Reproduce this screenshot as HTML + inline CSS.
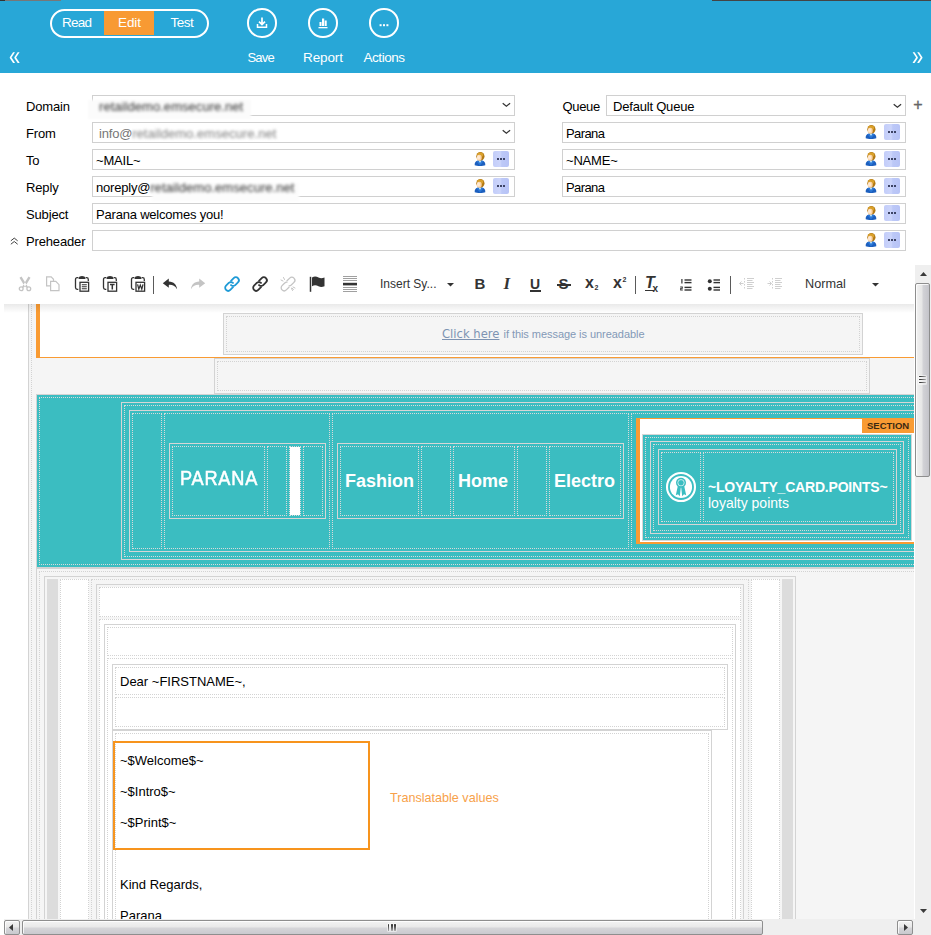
<!DOCTYPE html>
<html><head><meta charset="utf-8"><title>Mail editor</title>
<style>
html,body{margin:0;padding:0;}
body{width:931px;height:935px;overflow:hidden;background:#fff;position:relative;font-family:"Liberation Sans",sans-serif;}
div{position:absolute;box-sizing:border-box;}
.t{white-space:nowrap;line-height:16px;font-size:13px;color:#000;}
.tb{border:1px solid #d3d3d3;}
.td{border:1px dotted #d3d3d3;}
.tbt{border:1px solid #d6d6d6;}
.tdt{border:1px dotted #dadada;}
.inp{border:1px solid #d0d0d0;background:#fff;}
.dots{background:linear-gradient(90deg,#c3cdf9,#ccd5fb 45%,#bcc8f7 55%,#b7c3f6);border-radius:2px;}
svg{position:absolute;overflow:visible;}
</style></head>
<body>
<div style="left:0px;top:0px;width:931px;height:73px;background:#28a7d7;"></div>
<div style="left:0px;top:0px;width:5px;height:1px;background:#333;"></div>
<div style="left:5px;top:0px;width:56px;height:1px;background:#777;"></div>
<div style="left:712px;top:0px;width:219px;height:1px;background:#444;"></div>
<div style="left:50px;top:8.5px;width:158.5px;height:29px;border:2.5px solid #fff;border-radius:14.5px;overflow:hidden;"><div style="left:51.5px;top:0;width:50.5px;height:24px;background:#f89a33;"></div></div>
<div class="t" style="left:62px;top:15px;color:#fff;font-size:13.5px;line-height:16px;letter-spacing:-0.75px;">Read</div>
<div class="t" style="left:118px;top:15px;color:#fff;font-size:13.5px;line-height:16px;letter-spacing:-0.1px;">Edit</div>
<div class="t" style="left:170.5px;top:15px;color:#fff;font-size:13.5px;line-height:16px;letter-spacing:-0.5px;">Test</div>
<div class="t" style="left:247.5px;top:50px;color:#fff;font-size:13.5px;line-height:16px;font-size:13px;letter-spacing:-0.8px;">Save</div>
<div class="t" style="left:303px;top:50px;color:#fff;font-size:13.5px;line-height:16px;letter-spacing:-0.1px;">Report</div>
<div class="t" style="left:363.5px;top:50px;color:#fff;font-size:13.5px;line-height:16px;letter-spacing:-0.45px;">Actions</div>
<div style="left:247.3px;top:8.2px;width:29.4px;height:29.4px;border:2.6px solid #fff;border-radius:50%;"></div>
<div style="left:308.3px;top:8.2px;width:29.4px;height:29.4px;border:2.6px solid #fff;border-radius:50%;"></div>
<div style="left:369.3px;top:8.2px;width:29.4px;height:29.4px;border:2.6px solid #fff;border-radius:50%;"></div>
<svg style="left:247px;top:8px" width="30" height="30" viewBox="0 0 30 30"><path d="M15 9.5v6.5M12 13.6l3 3 3-3" fill="none" stroke="#fff" stroke-width="1.7"/><path d="M10.5 16v3.2h9V16" fill="none" stroke="#fff" stroke-width="1.5"/></svg>
<svg style="left:308px;top:8px" width="30" height="30" viewBox="0 0 30 30"><rect x="11.5" y="14" width="2" height="4" fill="#fff"/><rect x="14" y="10.5" width="2.2" height="7.5" fill="#fff"/><rect x="16.7" y="12.5" width="2" height="5.5" fill="#fff"/><rect x="10.5" y="19" width="9" height="1.3" fill="#fff"/></svg>
<svg style="left:369px;top:8px" width="30" height="30" viewBox="0 0 30 30"><rect x="10.6" y="16.2" width="2" height="2" fill="#fff"/><rect x="14" y="16.2" width="2" height="2" fill="#fff"/><rect x="17.4" y="16.2" width="2" height="2" fill="#fff"/></svg>
<div class="t" style="left:8.8px;top:41.2px;color:#fff;font-size:28px;line-height:30px;transform:scaleX(.72);transform-origin:0 0;">&laquo;</div>
<div class="t" style="left:912.3px;top:41.2px;color:#fff;font-size:28px;line-height:30px;transform:scaleX(.72);transform-origin:0 0;">&raquo;</div>
<div class="t" style="left:26px;top:99px;font-size:13px;letter-spacing:-0.15px;">Domain</div>
<div class="t" style="left:26px;top:126px;font-size:13px;letter-spacing:-0.15px;">From</div>
<div class="t" style="left:26px;top:153px;font-size:13px;letter-spacing:-0.15px;">To</div>
<div class="t" style="left:26px;top:180px;font-size:13px;letter-spacing:-0.15px;">Reply</div>
<div class="t" style="left:26px;top:207px;font-size:13px;letter-spacing:-0.15px;">Subject</div>
<div class="t" style="left:26px;top:234px;font-size:13px;letter-spacing:-0.15px;">Preheader</div>
<div class="t" style="left:562.5px;top:99px;font-size:13px;letter-spacing:-0.15px;letter-spacing:-0.35px;">Queue</div>
<div class="t" style="left:913.3px;top:96.5px;font-size:16px;line-height:16px;color:#666;-webkit-text-stroke:.35px #666;">+</div>
<svg style="left:10px;top:236.500px" width="8.500" height="8.500" viewBox="0 0 10 10"><path d="M1 4.5l4-3.2 4 3.2M1 8.5l4-3.2 4 3.2" fill="none" stroke="#333" stroke-width="1.1"/></svg>
<div class="inp" style="left:92px;top:95px;width:423px;height:21px;"></div>
<div class="inp" style="left:92px;top:122px;width:423px;height:21px;"></div>
<div class="inp" style="left:92px;top:149px;width:423px;height:21px;"></div>
<div class="inp" style="left:92px;top:176px;width:423px;height:21px;"></div>
<div class="inp" style="left:92px;top:203px;width:814px;height:21px;"></div>
<div class="inp" style="left:92px;top:230px;width:814px;height:21px;"></div>
<div class="inp" style="left:606px;top:95px;width:300px;height:21px;"></div>
<div class="inp" style="left:562px;top:122px;width:344px;height:21px;"></div>
<div class="inp" style="left:562px;top:149px;width:344px;height:21px;"></div>
<div class="inp" style="left:562px;top:176px;width:344px;height:21px;"></div>
<svg style="left:502px;top:102px" width="9" height="6" viewBox="0 0 9 6"><path d="M.7 1.200l3.700 3.100L8.100 1.200" fill="none" stroke="#333" stroke-width="1.200"/></svg>
<svg style="left:502px;top:129px" width="9" height="6" viewBox="0 0 9 6"><path d="M.7 1.200l3.700 3.100L8.100 1.200" fill="none" stroke="#333" stroke-width="1.200"/></svg>
<svg style="left:893px;top:102.5px" width="9" height="6" viewBox="0 0 9 6"><path d="M.7 1.200l3.700 3.100L8.100 1.200" fill="none" stroke="#333" stroke-width="1.200"/></svg>
<div style="left:88px;top:100px;width:163px;height:19px;background:#fbfbfb;filter:blur(1.300px);"></div>
<div style="left:152px;top:183px;width:147px;height:18px;background:#fcfcfc;filter:blur(1.300px);"></div>
<div class="t" style="left:99px;top:99px;font-size:13px;letter-spacing:-0.2px;"><span style="filter:blur(1.450px);color:#333;letter-spacing:0.05px;">retaildemo.emsecure.net</span></div>
<div class="t" style="left:99px;top:126px;font-size:13px;letter-spacing:-0.2px;"><span style="color:#777">info@</span><span style="filter:blur(1.450px);color:#808080;letter-spacing:0.05px;">retaildemo.emsecure.net</span></div>
<div class="t" style="left:96px;top:153px;font-size:13px;letter-spacing:-0.2px;">~MAIL~</div>
<div class="t" style="left:96px;top:180px;font-size:13px;letter-spacing:-0.2px;">noreply@<span style="filter:blur(1.450px);color:#333;letter-spacing:0.05px;">retaildemo.emsecure.net</span></div>
<div class="t" style="left:96px;top:207px;font-size:13px;letter-spacing:-0.2px;">Parana welcomes you!</div>
<div class="t" style="left:613px;top:99px;font-size:13px;letter-spacing:-0.2px;">Default Queue</div>
<div class="t" style="left:566px;top:126px;font-size:13px;letter-spacing:-0.2px;letter-spacing:-0.6px;">Parana</div>
<div class="t" style="left:566px;top:153px;font-size:13px;letter-spacing:-0.2px;">~NAME~</div>
<div class="t" style="left:566px;top:180px;font-size:13px;letter-spacing:-0.2px;letter-spacing:-0.6px;">Parana</div>
<svg style="left:474px;top:152px" width="12" height="14" viewBox="0 0 12 14"><path d="M.7 13.200c-.4-2.700 1.200-4.300 3.400-4.800h3.800c2.200.5 3.800 2.100 3.400 4.800c-2 1.100-8.600 1.100-10.600 0z" fill="#1c5fbe"/><path d="M2.500 9.300c1.500 2 2.500 3 3.500 4.300c1-1.300 2-2.300 3.500-4.300l-1.600-.9h-3.800z" fill="#2b78d8"/><path d="M4.600 8.500l1.400 2.600 1.400-2.600z" fill="#c9effa"/><ellipse cx="6.400" cy="4.300" rx="4.100" ry="4.300" fill="#b47a14"/><ellipse cx="6.200" cy="2.800" rx="3" ry="2.200" fill="#d9a02a"/><ellipse cx="5.200" cy="5.700" rx="2.500" ry="3" fill="#fcd3a6"/><ellipse cx="4.600" cy="5.400" rx="1.500" ry="2.200" fill="#fee9d2"/></svg>
<div class="dots" style="left:493px;top:151px;width:16px;height:16px;"><div style="left:4px;top:7px;width:2px;height:2px;background:#3d4466"></div><div style="left:7px;top:7px;width:2px;height:2px;background:#3d4466"></div><div style="left:10px;top:7px;width:2px;height:2px;background:#3d4466"></div></div>
<svg style="left:474px;top:179px" width="12" height="14" viewBox="0 0 12 14"><path d="M.7 13.200c-.4-2.700 1.200-4.300 3.400-4.800h3.800c2.200.5 3.800 2.100 3.400 4.800c-2 1.100-8.600 1.100-10.600 0z" fill="#1c5fbe"/><path d="M2.500 9.300c1.500 2 2.500 3 3.500 4.300c1-1.300 2-2.300 3.500-4.300l-1.600-.9h-3.800z" fill="#2b78d8"/><path d="M4.600 8.500l1.400 2.600 1.400-2.600z" fill="#c9effa"/><ellipse cx="6.400" cy="4.300" rx="4.100" ry="4.300" fill="#b47a14"/><ellipse cx="6.200" cy="2.800" rx="3" ry="2.200" fill="#d9a02a"/><ellipse cx="5.200" cy="5.700" rx="2.500" ry="3" fill="#fcd3a6"/><ellipse cx="4.600" cy="5.400" rx="1.500" ry="2.200" fill="#fee9d2"/></svg>
<div class="dots" style="left:493px;top:178px;width:16px;height:16px;"><div style="left:4px;top:7px;width:2px;height:2px;background:#3d4466"></div><div style="left:7px;top:7px;width:2px;height:2px;background:#3d4466"></div><div style="left:10px;top:7px;width:2px;height:2px;background:#3d4466"></div></div>
<svg style="left:865px;top:125px" width="12" height="14" viewBox="0 0 12 14"><path d="M.7 13.200c-.4-2.700 1.200-4.300 3.400-4.800h3.800c2.200.5 3.800 2.100 3.400 4.800c-2 1.100-8.600 1.100-10.600 0z" fill="#1c5fbe"/><path d="M2.500 9.300c1.500 2 2.500 3 3.500 4.300c1-1.300 2-2.300 3.500-4.300l-1.600-.9h-3.800z" fill="#2b78d8"/><path d="M4.600 8.500l1.400 2.600 1.400-2.600z" fill="#c9effa"/><ellipse cx="6.400" cy="4.300" rx="4.100" ry="4.300" fill="#b47a14"/><ellipse cx="6.200" cy="2.800" rx="3" ry="2.200" fill="#d9a02a"/><ellipse cx="5.200" cy="5.700" rx="2.500" ry="3" fill="#fcd3a6"/><ellipse cx="4.600" cy="5.400" rx="1.500" ry="2.200" fill="#fee9d2"/></svg>
<div class="dots" style="left:884px;top:124px;width:16px;height:16px;"><div style="left:4px;top:7px;width:2px;height:2px;background:#3d4466"></div><div style="left:7px;top:7px;width:2px;height:2px;background:#3d4466"></div><div style="left:10px;top:7px;width:2px;height:2px;background:#3d4466"></div></div>
<svg style="left:865px;top:152px" width="12" height="14" viewBox="0 0 12 14"><path d="M.7 13.200c-.4-2.700 1.200-4.300 3.400-4.800h3.800c2.200.5 3.800 2.100 3.400 4.800c-2 1.100-8.600 1.100-10.600 0z" fill="#1c5fbe"/><path d="M2.500 9.300c1.500 2 2.500 3 3.500 4.300c1-1.300 2-2.300 3.500-4.300l-1.600-.9h-3.800z" fill="#2b78d8"/><path d="M4.600 8.500l1.400 2.600 1.400-2.600z" fill="#c9effa"/><ellipse cx="6.400" cy="4.300" rx="4.100" ry="4.300" fill="#b47a14"/><ellipse cx="6.200" cy="2.800" rx="3" ry="2.200" fill="#d9a02a"/><ellipse cx="5.200" cy="5.700" rx="2.500" ry="3" fill="#fcd3a6"/><ellipse cx="4.600" cy="5.400" rx="1.500" ry="2.200" fill="#fee9d2"/></svg>
<div class="dots" style="left:884px;top:151px;width:16px;height:16px;"><div style="left:4px;top:7px;width:2px;height:2px;background:#3d4466"></div><div style="left:7px;top:7px;width:2px;height:2px;background:#3d4466"></div><div style="left:10px;top:7px;width:2px;height:2px;background:#3d4466"></div></div>
<svg style="left:865px;top:179px" width="12" height="14" viewBox="0 0 12 14"><path d="M.7 13.200c-.4-2.700 1.200-4.300 3.400-4.800h3.800c2.200.5 3.800 2.100 3.400 4.800c-2 1.100-8.600 1.100-10.600 0z" fill="#1c5fbe"/><path d="M2.500 9.300c1.500 2 2.500 3 3.500 4.300c1-1.300 2-2.300 3.500-4.300l-1.600-.9h-3.800z" fill="#2b78d8"/><path d="M4.600 8.500l1.400 2.600 1.400-2.600z" fill="#c9effa"/><ellipse cx="6.400" cy="4.300" rx="4.100" ry="4.300" fill="#b47a14"/><ellipse cx="6.200" cy="2.800" rx="3" ry="2.200" fill="#d9a02a"/><ellipse cx="5.200" cy="5.700" rx="2.500" ry="3" fill="#fcd3a6"/><ellipse cx="4.600" cy="5.400" rx="1.500" ry="2.200" fill="#fee9d2"/></svg>
<div class="dots" style="left:884px;top:178px;width:16px;height:16px;"><div style="left:4px;top:7px;width:2px;height:2px;background:#3d4466"></div><div style="left:7px;top:7px;width:2px;height:2px;background:#3d4466"></div><div style="left:10px;top:7px;width:2px;height:2px;background:#3d4466"></div></div>
<svg style="left:865px;top:206px" width="12" height="14" viewBox="0 0 12 14"><path d="M.7 13.200c-.4-2.700 1.200-4.300 3.400-4.800h3.800c2.200.5 3.800 2.100 3.400 4.800c-2 1.100-8.600 1.100-10.600 0z" fill="#1c5fbe"/><path d="M2.500 9.300c1.500 2 2.500 3 3.500 4.300c1-1.300 2-2.300 3.500-4.300l-1.600-.9h-3.800z" fill="#2b78d8"/><path d="M4.600 8.500l1.400 2.600 1.400-2.600z" fill="#c9effa"/><ellipse cx="6.400" cy="4.300" rx="4.100" ry="4.300" fill="#b47a14"/><ellipse cx="6.200" cy="2.800" rx="3" ry="2.200" fill="#d9a02a"/><ellipse cx="5.200" cy="5.700" rx="2.500" ry="3" fill="#fcd3a6"/><ellipse cx="4.600" cy="5.400" rx="1.500" ry="2.200" fill="#fee9d2"/></svg>
<div class="dots" style="left:884px;top:205px;width:16px;height:16px;"><div style="left:4px;top:7px;width:2px;height:2px;background:#3d4466"></div><div style="left:7px;top:7px;width:2px;height:2px;background:#3d4466"></div><div style="left:10px;top:7px;width:2px;height:2px;background:#3d4466"></div></div>
<svg style="left:865px;top:233px" width="12" height="14" viewBox="0 0 12 14"><path d="M.7 13.200c-.4-2.700 1.200-4.300 3.400-4.800h3.800c2.200.5 3.800 2.100 3.400 4.800c-2 1.100-8.600 1.100-10.600 0z" fill="#1c5fbe"/><path d="M2.500 9.300c1.500 2 2.500 3 3.500 4.300c1-1.300 2-2.300 3.500-4.300l-1.600-.9h-3.800z" fill="#2b78d8"/><path d="M4.600 8.500l1.400 2.600 1.400-2.600z" fill="#c9effa"/><ellipse cx="6.400" cy="4.300" rx="4.100" ry="4.300" fill="#b47a14"/><ellipse cx="6.200" cy="2.800" rx="3" ry="2.200" fill="#d9a02a"/><ellipse cx="5.200" cy="5.700" rx="2.500" ry="3" fill="#fcd3a6"/><ellipse cx="4.600" cy="5.400" rx="1.500" ry="2.200" fill="#fee9d2"/></svg>
<div class="dots" style="left:884px;top:232px;width:16px;height:16px;"><div style="left:4px;top:7px;width:2px;height:2px;background:#3d4466"></div><div style="left:7px;top:7px;width:2px;height:2px;background:#3d4466"></div><div style="left:10px;top:7px;width:2px;height:2px;background:#3d4466"></div></div>
<div id="ed" style="left:0;top:265px;width:915px;height:654px;overflow:hidden;">
<div class="tb" style="left:28px;top:0px;width:886px;height:936px;background:#f5f5f5;border-right:0;"></div>
<div class="td" style="left:31px;top:0px;width:883px;height:936px;border-right:0;"></div>
<div style="left:36px;top:0px;width:878px;height:93px;background:#fff;border-left:4px solid #f99b33;border-bottom:1px solid #f99b33;border-right:0;"></div>
<div class="tb" style="left:223px;top:48px;width:640px;height:42px;background:#f5f5f5;"></div>
<div class="td" style="left:226px;top:51px;width:634px;height:36px;"></div>
<div class="t" style="left:442px;top:60.8px;"><span style="font-family:'DejaVu Sans',sans-serif;font-size:11.6px;text-decoration:underline;color:#7d93b2;">Click here</span></div>
<div class="t" style="left:503.5px;top:61.5px;font-size:11px;color:#8399b7;line-height:14px;letter-spacing:-0.05px;">if this message is unreadable</div>
<div class="tb" style="left:214px;top:93px;width:656px;height:36px;"></div>
<div class="td" style="left:217px;top:96px;width:650px;height:30px;"></div>
<div class="tb" style="left:36px;top:129px;width:878px;height:174px;background:#3bbdc1;border-right:0;"></div>
<div class="tdt" style="left:39px;top:132px;width:875px;height:168px;border-right:0;"></div>
<div class="tbt" style="left:121px;top:137px;width:793px;height:158px;border-right:0;"></div>
<div class="tdt" style="left:124px;top:140px;width:790px;height:152px;border-right:0;"></div>
<div class="tbt" style="left:129px;top:145px;width:785px;height:142px;border-right:0;"></div>
<div class="tdt" style="left:132px;top:148px;width:30px;height:136px;"></div>
<div class="tdt" style="left:164px;top:148px;width:166px;height:136px;"></div>
<div class="tdt" style="left:332px;top:148px;width:297px;height:136px;"></div>
<div class="tdt" style="left:631px;top:148px;width:283px;height:136px;border-right:0;"></div>
<div class="tbt" style="left:169px;top:178px;width:157px;height:76px;"></div>
<div class="tdt" style="left:172px;top:181px;width:93px;height:70px;"></div>
<div class="tdt" style="left:267px;top:181px;width:20px;height:70px;"></div>
<div class="tdt" style="left:289px;top:181px;width:12px;height:70px;background:#fff;background-clip:padding-box;"></div>
<div class="tdt" style="left:303px;top:181px;width:20px;height:70px;"></div>
<div class="t" style="left:180px;top:200px;color:#fff;font-size:21px;line-height:26px;letter-spacing:0.9px;transform:scaleX(0.865);transform-origin:0 0;-webkit-text-stroke:0.55px #fff;">PARANA</div>
<div class="tbt" style="left:337px;top:178px;width:287px;height:76px;"></div>
<div class="tdt" style="left:340px;top:181px;width:79px;height:70px;"></div>
<div class="tdt" style="left:421px;top:181px;width:30px;height:70px;"></div>
<div class="tdt" style="left:453px;top:181px;width:62px;height:70px;"></div>
<div class="tdt" style="left:517px;top:181px;width:30px;height:70px;"></div>
<div class="tdt" style="left:549px;top:181px;width:72px;height:70px;"></div>
<div class="t" style="left:345px;top:205px;color:#fff;font-size:18px;font-weight:bold;line-height:22px;">Fashion</div>
<div class="t" style="left:458px;top:205px;color:#fff;font-size:18px;font-weight:bold;line-height:22px;">Home</div>
<div class="t" style="left:554px;top:205px;color:#fff;font-size:18px;font-weight:bold;line-height:22px;">Electro</div>
<div style="left:636px;top:153px;width:278px;height:126px;background:#fff;border-left:4px solid #f99b33;border-top:1px solid #f99b33;border-bottom:2px solid #f99b33;border-right:0;"></div>
<div style="left:862px;top:153px;width:52px;height:15px;background:#f99b33;"></div>
<div class="t" style="left:867px;top:154px;font-size:9.5px;font-weight:bold;letter-spacing:0px;color:#3c2a12;line-height:14px;">SECTION</div>
<div class="tbt" style="left:642px;top:169px;width:270px;height:107px;background:#3bbdc1;"></div>
<div class="tdt" style="left:645px;top:172px;width:264px;height:101px;"></div>
<div class="tbt" style="left:650px;top:176px;width:254px;height:93px;"></div>
<div class="tdt" style="left:653px;top:179px;width:248px;height:87px;"></div>
<div class="tbt" style="left:658px;top:184px;width:239px;height:76px;"></div>
<div class="tdt" style="left:661px;top:187px;width:40px;height:70px;"></div>
<div class="tdt" style="left:703px;top:187px;width:191px;height:70px;"></div>
<div class="t" style="left:708px;top:214px;color:#fff;font-size:14px;font-weight:bold;line-height:16px;letter-spacing:-0.2px;">~LOYALTY_CARD.POINTS~</div>
<div class="t" style="left:708px;top:230px;color:#fff;font-size:14px;line-height:16px;">loyalty points</div>
<svg style="left:666px;top:206.8px" width="30" height="30" viewBox="0 0 30 30"><circle cx="15" cy="15" r="14" fill="none" stroke="#fff" stroke-width="2.100"/><circle cx="15" cy="15" r="11.100" fill="#fff"/><circle cx="15" cy="10.750" r="5" fill="#3bbdc1"/><circle cx="15" cy="10.750" r="3.200" fill="none" stroke="#e6f7f7" stroke-width=".8"/><path d="M11.700 14.400h3.200l-1.100 9.800-1.800-1.900-2.200 1z" fill="#3bbdc1"/><path d="M15.100 14.400h3.200l1.900 8.900-2.200-1-1.800 1.900z" fill="#3bbdc1"/></svg>
<div class="tb" style="left:36px;top:303px;width:878px;height:733px;border-right:0;"></div>
<div class="td" style="left:39px;top:306px;width:875px;height:730px;border-right:0;"></div>
<div class="tb" style="left:44px;top:311px;width:752px;height:725px;"></div>
<div style="left:47px;top:314px;width:11px;height:722px;background:#dcdcdc;"></div>
<div class="td" style="left:60px;top:314px;width:29px;height:722px;background:#fff;"></div>
<div class="td" style="left:91px;top:314px;width:658px;height:722px;"></div>
<div class="td" style="left:751px;top:314px;width:29px;height:722px;background:#fff;"></div>
<div style="left:782px;top:314px;width:11px;height:722px;background:#dcdcdc;"></div>
<div class="tb" style="left:96px;top:319px;width:648px;height:717px;"></div>
<div class="td" style="left:99px;top:322px;width:642px;height:30px;background:#fff;"></div>
<div class="td" style="left:99px;top:354px;width:642px;height:682px;background:#fff;"></div>
<div class="tb" style="left:104px;top:359px;width:632px;height:677px;"></div>
<div class="td" style="left:107px;top:362px;width:626px;height:29px;"></div>
<div class="td" style="left:107px;top:393px;width:626px;height:643px;"></div>
<div class="tb" style="left:112px;top:399px;width:616px;height:66px;"></div>
<div class="td" style="left:115px;top:402px;width:610px;height:28px;"></div>
<div class="td" style="left:115px;top:432px;width:610px;height:30px;"></div>
<div class="tb" style="left:112px;top:465px;width:600px;height:571px;"></div>
<div class="td" style="left:115px;top:468px;width:594px;height:568px;"></div>
<div class="t" style="left:120px;top:409px;font-size:13px;line-height:15px;">Dear ~FIRSTNAME~,</div>
<div style="left:113px;top:476px;width:257px;height:109px;border:2px solid #f7941d;"></div>
<div class="t" style="left:120px;top:488px;font-size:13px;line-height:15px;">~$Welcome$~</div>
<div class="t" style="left:120px;top:519px;font-size:13px;line-height:15px;">~$Intro$~</div>
<div class="t" style="left:120px;top:550px;font-size:13px;line-height:15px;">~$Print$~</div>
<div class="t" style="left:120px;top:612px;font-size:13px;line-height:15px;">Kind Regards,</div>
<div class="t" style="left:120px;top:643px;font-size:13px;line-height:15px;">Parana</div>
<div class="t" style="left:390px;top:525.7px;font-size:12.6px;line-height:15px;color:#f7a14a;">Translatable values</div>
</div>
<div style="left:4px;top:304px;width:910px;height:9px;background:linear-gradient(rgba(0,0,0,0.085),rgba(0,0,0,0));"></div>
<div style="left:0px;top:262px;width:914px;height:42px;background:#fff;"></div>
<svg style="left:17px;top:276px" width="16" height="16" viewBox="0 0 16 16"><g fill="none" stroke="#c4c4c4"><path d="M2.500 1.700L4.500 .5L9.100 8L10.900 10.800L9.400 11.700L7 9.200zM13.500 1.700L11.500 .5L6.900 8L5.100 10.800L6.600 11.700L9 9.200z" fill="#c4c4c4" stroke="none"/><circle cx="4.200" cy="12.800" r="1.900" stroke-width="1.300"/><circle cx="11.800" cy="12.800" r="1.900" stroke-width="1.300"/></g></svg>
<svg style="left:45px;top:276px" width="16" height="16" viewBox="0 0 16 16"><g fill="#fff" stroke="#c4c4c4" stroke-width="1.200"><path d="M1.600 .8h4.600l2.300 2.500v6.500H1.600z"/><path d="M5.600 5.300h5.200l3.200 3.400v6H5.600z"/></g></svg>
<svg style="left:73.5px;top:276px" width="16" height="16" viewBox="0 0 16 16"><g fill="none" stroke="#333"><path d="M4.300 1.700H3.200Q1.500 1.700 1.500 3.400V11.600Q1.500 13.300 3.200 13.300H4.300" stroke-width="1.300"/><path d="M11.700 1.700H12.600Q14.300 1.700 14.300 3.400V5" stroke-width="1.300"/><path d="M4.600 3V1.800Q5 0 8 0T11.400 1.800V3z" fill="#333" stroke="none"/><rect x="6" y="6.300" width="8.600" height="8.900" stroke-width="1.300" fill="#fff"/><path d="M7.800 8.700h5M7.800 10.700h5M7.800 12.700h5" stroke-width="1.100"/></g></svg>
<svg style="left:102px;top:276px" width="16" height="16" viewBox="0 0 16 16"><g fill="none" stroke="#333"><path d="M4.300 1.700H3.200Q1.500 1.700 1.500 3.400V11.600Q1.500 13.300 3.200 13.300H4.300" stroke-width="1.300"/><path d="M11.700 1.700H12.600Q14.300 1.700 14.300 3.400V5" stroke-width="1.300"/><path d="M4.600 3V1.800Q5 0 8 0T11.400 1.800V3z" fill="#333" stroke="none"/><rect x="6" y="6.300" width="8.600" height="8.900" stroke-width="1.300" fill="#fff"/><path d="M8 8.500h4.600M10.300 8.500v5" stroke-width="1.500"/></g></svg>
<svg style="left:130px;top:276px" width="16" height="16" viewBox="0 0 16 16"><g fill="none" stroke="#333"><path d="M4.300 1.700H3.200Q1.500 1.700 1.500 3.400V11.600Q1.500 13.300 3.200 13.300H4.300" stroke-width="1.300"/><path d="M11.700 1.700H12.600Q14.300 1.700 14.300 3.400V5" stroke-width="1.300"/><path d="M4.600 3V1.800Q5 0 8 0T11.400 1.800V3z" fill="#333" stroke="none"/><rect x="6" y="6.300" width="8.600" height="8.900" stroke-width="1.300" fill="#fff"/><path d="M7.600 8.400l1.200 4.800 1.500-4.200 1.500 4.200 1.200-4.800" stroke-width="1.250"/></g></svg>
<div style="left:153px;top:276px;width:1px;height:18px;background:#5a5a5a"></div>
<svg style="left:162px;top:276px" width="16" height="16" viewBox="0 0 16 16"><path d="M6.800 2.600L.8 7.200l6 4.600V8.900c3.400-.3 6 .8 8.300 4.300-.5-4.500-3.300-7.500-8.300-7.700z" fill="#333"/></svg>
<svg style="left:190px;top:276px" width="16" height="16" viewBox="0 0 16 16"><g transform="translate(16,0) scale(-1,1)"><path d="M6.800 2.600L.8 7.200l6 4.600V8.900c3.400-.3 6 .8 8.300 4.300-.5-4.500-3.300-7.500-8.300-7.700z" fill="#c4c4c4"/></g></svg>
<svg style="left:224px;top:276px" width="16" height="16" viewBox="0 0 16 16"><g fill="none" stroke="#1e9ad6" stroke-width="1.800" stroke-linecap="round"><path d="M7 4.800l2.700-2.700a3 3 0 0 1 4.250 4.250l-2.700 2.700a3 3 0 0 1-4.250 0"/><path d="M9 11.200l-2.700 2.700a3 3 0 0 1-4.250-4.250l2.700-2.700a3 3 0 0 1 4.250 0"/></g></svg>
<svg style="left:252px;top:276px" width="16" height="16" viewBox="0 0 16 16"><g fill="none" stroke="#333" stroke-width="1.800" stroke-linecap="round"><path d="M7 4.800l2.700-2.700a3 3 0 0 1 4.250 4.250l-2.700 2.700a3 3 0 0 1-4.250 0"/><path d="M9 11.200l-2.700 2.700a3 3 0 0 1-4.250-4.250l2.700-2.700a3 3 0 0 1 4.250 0"/></g></svg>
<svg style="left:280px;top:276px" width="16" height="16" viewBox="0 0 16 16"><g fill="none" stroke="#c4c4c4" stroke-width="1.300" stroke-linecap="round"><path d="M7 4.800l2.700-2.700a3 3 0 0 1 4.250 4.250l-2.700 2.700a3 3 0 0 1-2.200.8"/><path d="M9 11.200l-2.700 2.700a3 3 0 0 1-4.250-4.250l2.700-2.700a3 3 0 0 1 2.200-.8"/><path d="M3.500 1.500l1 2M1 4l2 1M12.500 14.500l-1-2M15 12l-2-1M13.500 13.500l-1.500-1.500" stroke-width="1"/></g></svg>
<svg style="left:308.5px;top:276px" width="16" height="16" viewBox="0 0 16 16"><path d="M1.500 .8V15.800" stroke="#333" stroke-width="1.500" fill="none"/><path d="M3 1.500c2.500-1.500 4.500-1 6.500 0s3.500 1 6 0v8.800c-2.500 1-4 1-6 0s-4-1.500-6.500 0z" fill="#333"/></svg>
<svg style="left:342px;top:276px" width="16" height="16" viewBox="0 0 16 16"><g stroke="#a0a0a0" stroke-width="1"><path d="M1 .5h14M1 2.500h14M1 4.500h14M1 11.500h14M1 13.500h14M1 15.500h14"/></g><rect x="1" y="6.800" width="14" height="2.600" fill="#333"/></svg>
<svg style="left:447px;top:283px" width="7" height="4" viewBox="0 0 7 4"><path d="M0 0h7L3.500 3.600z" fill="#333"/></svg>
<svg style="left:871.5px;top:283px" width="7" height="4" viewBox="0 0 7 4"><path d="M0 0h7L3.500 3.600z" fill="#333"/></svg>
<div class="t" style="left:474.5px;top:275px;font-weight:bold;font-size:15px;line-height:18px;color:#333;">B</div>
<div class="t" style="left:503.5px;top:274.5px;font-weight:bold;font-size:15px;line-height:18px;color:#333;font-style:italic;font-family:'Liberation Serif',serif;font-size:17px;">I</div>
<div class="t" style="left:530px;top:275px;font-weight:bold;font-size:15px;line-height:18px;color:#333;font-size:14px;">U</div>
<div style="left:530px;top:290px;width:11px;height:1.500px;background:#333"></div>
<div class="t" style="left:558.5px;top:275px;font-weight:bold;font-size:15px;line-height:18px;color:#333;">S</div>
<div style="left:557px;top:284px;width:14px;height:1.500px;background:#333"></div>
<div class="t" style="left:585px;top:273.5px;font-weight:bold;font-size:15px;line-height:18px;color:#333;font-size:16px;">x</div>
<div class="t" style="left:594.5px;top:284px;font-weight:bold;font-size:15px;line-height:18px;color:#333;font-size:7px;line-height:8px;">2</div>
<div class="t" style="left:613px;top:273.5px;font-weight:bold;font-size:15px;line-height:18px;color:#333;font-size:16px;">x</div>
<div class="t" style="left:622.5px;top:276px;font-weight:bold;font-size:15px;line-height:18px;color:#333;font-size:7px;line-height:8px;">2</div>
<div style="left:635px;top:276px;width:1px;height:18px;background:#5a5a5a"></div>
<div class="t" style="left:645px;top:274px;font-weight:bold;font-size:15px;line-height:18px;color:#333;font-style:italic;font-size:16px;">T</div>
<div style="left:645px;top:289.500px;width:9px;height:1.500px;background:#333"></div>
<div class="t" style="left:652.5px;top:282.5px;font-weight:bold;font-size:15px;line-height:18px;color:#333;font-size:10px;line-height:11px;">x</div>
<svg style="left:678px;top:276.5px" width="16" height="16" viewBox="0 0 16 16"><g fill="#333"><rect x="6.500" y="2.300" width="7" height="1.400"/><rect x="6.500" y="4.900" width="7" height="1.400"/><rect x="6.500" y="9.700" width="7" height="1.400"/><rect x="6.500" y="12.300" width="7" height="1.400"/><path d="M3.300 2v4.600h1.200V2z M2.200 9.500h2.600v2.200h-1.600v.8h1.600v1h-2.600v-2.700h1.600v-.5h-1.600z"/></g></svg>
<svg style="left:706.4px;top:276.5px" width="16" height="16" viewBox="0 0 16 16"><g fill="#333"><rect x="7.500" y="2.300" width="6.500" height="1.400"/><rect x="7.500" y="4.900" width="6.500" height="1.400"/><rect x="7.500" y="9.700" width="6.500" height="1.400"/><rect x="7.500" y="12.300" width="6.500" height="1.400"/><circle cx="3.800" cy="4.300" r="2"/><circle cx="3.800" cy="11.700" r="2"/></g></svg>
<div style="left:730px;top:276px;width:1px;height:18px;background:#5a5a5a"></div>
<svg style="left:739px;top:276px" width="16" height="16" viewBox="0 0 16 16"><g fill="none" stroke="#cfcfcf" stroke-width="1"><path d="M8 2.500h7M8 4.500h5.500M8 6.500h7M8 8.500h5.500M8 10.500h7M8 12.500h5.500"/><path d="M5.500 2v12" stroke-dasharray="1.500,1.500"/><path d="M4.500 7.500h-4M2.500 5.500l-2 2 2 2"/></g></svg>
<svg style="left:767px;top:276px" width="16" height="16" viewBox="0 0 16 16"><g fill="none" stroke="#cfcfcf" stroke-width="1"><path d="M8 2.500h7M8 4.500h5.500M8 6.500h7M8 8.500h5.500M8 10.500h7M8 12.500h5.500"/><path d="M5.500 2v12" stroke-dasharray="1.500,1.500"/><path d="M.5 7.500h4M2.500 5.500l2 2-2 2"/></g></svg>
<div class="t" style="left:380px;top:276px;font-size:12px;color:#333;">Insert Sy...</div>
<div class="t" style="left:805px;top:276px;font-size:12.7px;color:#333;">Normal</div>
<div style="left:915px;top:265px;width:16px;height:670px;background:#efefef;"></div>
<div style="left:0px;top:919px;width:931px;height:16px;background:#efefef;"></div>
<div style="left:0px;top:919px;width:4px;height:16px;background:#fff;"></div>
<div style="left:915px;top:283px;width:15px;height:194px;border:1px solid #8e8e8e;border-radius:2px;box-shadow:inset 1px 1px 0 0 rgba(255,255,255,.8);background:linear-gradient(90deg,#f2f2f2,#e6e6e6 45%,#d2d2d6 55%,#c4c4ca);"></div>
<div style="left:918px;top:375px;width:9px;height:9.5px;background:rgba(255,255,255,.5);border-radius:1.5px;filter:blur(.6px);"></div>
<div style="left:919px;top:376.1px;width:7.3px;height:1.4px;background:linear-gradient(90deg,#222,#555 40%,#aaa);border-radius:.7px;"></div>
<div style="left:919px;top:379.05px;width:7.3px;height:1.4px;background:linear-gradient(90deg,#222,#555 40%,#aaa);border-radius:.7px;"></div>
<div style="left:919px;top:382px;width:7.3px;height:1.4px;background:linear-gradient(90deg,#222,#555 40%,#aaa);border-radius:.7px;"></div>
<svg style="left:920px;top:272px" width="7" height="4" viewBox="0 0 7 4"><path d="M0 4L3.500 0L7 4z" fill="#3a3a3a"/></svg>
<svg style="left:920px;top:909px" width="7" height="4" viewBox="0 0 7 4"><path d="M0 0L3.500 4L7 0z" fill="#3a3a3a"/></svg>
<div style="left:4px;top:920px;width:16px;height:15px;border:1px solid #8e8e8e;border-radius:2px;box-shadow:inset 1px 1px 0 0 rgba(255,255,255,.8);background:linear-gradient(#f3f3f3,#e8e8e8 48%,#d6d6d9 52%,#c9c9ce);"></div>
<div style="left:897px;top:920px;width:16px;height:15px;border:1px solid #8e8e8e;border-radius:2px;box-shadow:inset 1px 1px 0 0 rgba(255,255,255,.8);background:linear-gradient(#f3f3f3,#e8e8e8 48%,#d6d6d9 52%,#c9c9ce);"></div>
<svg style="left:9px;top:924px" width="4" height="7" viewBox="0 0 4 7"><path d="M4 0L0 3.500L4 7z" fill="#3a3a3a"/></svg>
<svg style="left:904px;top:924px" width="4" height="7" viewBox="0 0 4 7"><path d="M0 0L4 3.500L0 7z" fill="#3a3a3a"/></svg>
<div style="left:21.5px;top:920px;width:741.5px;height:15px;border:1px solid #8e8e8e;border-radius:2px;box-shadow:inset 1px 1px 0 0 rgba(255,255,255,.8);background:linear-gradient(#f3f3f3,#e8e8e8 48%,#d6d6d9 52%,#c9c9ce);"></div>
<div style="left:387px;top:923.3px;width:9.5px;height:8.5px;background:rgba(255,255,255,.5);border-radius:1.5px;filter:blur(.6px);"></div>
<div style="left:388.1px;top:924.2px;width:1.4px;height:6.8px;background:linear-gradient(#222,#555 40%,#aaa);border-radius:.7px;"></div>
<div style="left:391.15px;top:924.2px;width:1.4px;height:6.8px;background:linear-gradient(#222,#555 40%,#aaa);border-radius:.7px;"></div>
<div style="left:394.2px;top:924.2px;width:1.4px;height:6.8px;background:linear-gradient(#222,#555 40%,#aaa);border-radius:.7px;"></div>
</body></html>
